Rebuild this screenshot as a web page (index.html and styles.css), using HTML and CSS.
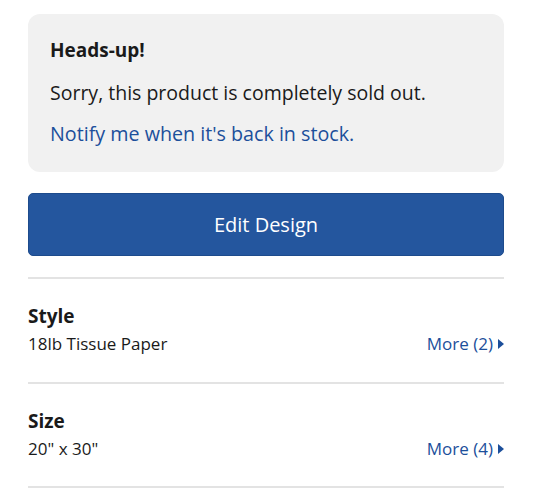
FILE: index.html
```html
<!DOCTYPE html>
<html>
<head>
<meta charset="utf-8">
<link rel="stylesheet" href="styles.css">
</head>
<body>
<div class="page">
  <div class="notice">
    <div class="notice-title">Heads-up!</div>
    <p class="notice-text">Sorry, this product is completely sold out.</p>
    <a class="notice-link" href="#">Notify me when it's back in stock.</a>
  </div>
  <button class="edit-btn">Edit Design</button>
  <div class="option">
    <div class="option-label">Style</div>
    <div class="option-row">
      <span class="option-value">18lb Tissue Paper</span>
      <a class="more" href="#">More (2)<span class="tri"></span></a>
    </div>
  </div>
  <div class="option">
    <div class="option-label">Size</div>
    <div class="option-row">
      <span class="option-value">20" x 30"</span>
      <a class="more" href="#">More (4)<span class="tri"></span></a>
    </div>
  </div>
</div>
</body>
</html>
```
FILE: styles.css
```css
html, body { margin: 0; padding: 0; background: #fff; }
body { font-family: "Open Sans", Lato, sans-serif; color: #1a1a1a; }
.page { padding: 14px 42px 0 28px; display: flex; flex-direction: column; }
.notice { background: #f1f1f1; border-radius: 12px; padding: 24px 22px 26px; display: flex; flex-direction: column; }
.notice-title { font-weight: 700; font-size: 19px; line-height: 24px; }
.notice-text { margin: 19px 0 0; font-size: 19.5px; line-height: 24px; }
.notice-link { margin-top: 17px; font-size: 19.7px; line-height: 24px; color: #1c4f9b; text-decoration: none; }
.edit-btn { margin-top: 21px; height: 63px; background: #24569e; border: 1px solid #1d4b8c; border-radius: 5px; color: #fff; font-family: inherit; font-size: 20px; }
.option { border-top: 2px solid #e3e3e3; margin-top: 21px; padding: 26px 0 27px; }
.option + .option { margin-top: 0; }
.option:last-child { border-bottom: 2px solid #e3e3e3; padding-bottom: 26px; }
.option-label { font-weight: 700; font-size: 19px; line-height: 22px; }
.option-row { display: flex; justify-content: space-between; align-items: baseline; margin-top: 6px; font-size: 17px; line-height: 22px; }
.more { color: #1c4f9b; text-decoration: none; display: flex; align-items: center; gap: 5px; }
.tri { width: 0; height: 0; border-left: 6px solid #1c4f9b; border-top: 5px solid transparent; border-bottom: 5px solid transparent; }
```
